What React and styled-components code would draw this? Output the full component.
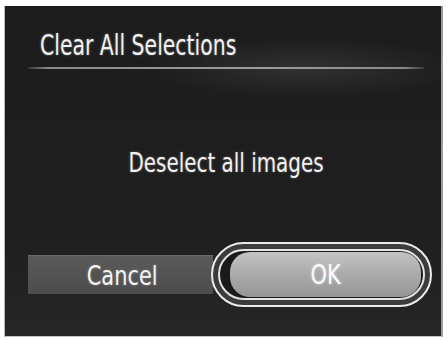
import React from 'react'
import styled, { createGlobalStyle } from 'styled-components'

const GlobalStyle = createGlobalStyle`
  html, body {
    margin: 0;
    padding: 0;
    background: #fff;
  }
  body {
    font-family: "DejaVu Sans Condensed", "DejaVu Sans", sans-serif;
    font-stretch: condensed;
  }
`

const Screen = styled.div`
  margin: 6px 0 0 4px;
  width: 439px;
  height: 331px;
  box-sizing: border-box;
  border-left: 1px solid #b8b8b8;
  border-right: 2px solid #9c9c9c;
  border-bottom: 1px solid #c4c4c4;
  background:
    radial-gradient(ellipse 160px 30px at 300px 62px, rgba(255, 255, 255, 0.09), transparent),
    linear-gradient(180deg, #1c1c1c 0%, #1f1f1f 70%, #262626 100%);
  display: flex;
  flex-direction: column;
  color: #f2f2f2;
`

// the camera font is narrower than anything installed, so squeeze the glyphs
const Squeeze = styled.span`
  display: inline-block;
  transform: scaleX(${({ $x }) => $x});
  transform-origin: ${({ $origin }) => $origin || 'center'};
  white-space: nowrap;
`

const Header = styled.div`
  padding: 24px 0 0 35px;
`

const Title = styled.h1`
  margin: 0;
  font-size: 28px;
  line-height: 32px;
  font-weight: 400;
  text-shadow: 0 0 3px rgba(255, 255, 255, 0.35);
`

const Divider = styled.div`
  margin: 5px 17px 0 23px;
  height: 2px;
  background: linear-gradient(90deg, rgba(150, 150, 150, 0.2) 0%, #8a8a8a 5%, #9c9c9c 60%, #8a8a8a 95%, rgba(150, 150, 150, 0.2) 100%);
`

const Body = styled.div`
  flex: 1;
  display: flex;
  align-items: center;
  justify-content: center;
  padding: 14px 0 0 6px;
`

const Message = styled.p`
  margin: 0;
  font-size: 27px;
  line-height: 30px;
  text-shadow: 0 0 3px rgba(255, 255, 255, 0.3);
`

const Footer = styled.div`
  display: flex;
  align-items: center;
  padding: 0 9px 29px 23px;
`

const CancelButton = styled.button`
  width: 185px;
  height: 39px;
  border: none;
  border-top: 1px solid #6a6a6a;
  background: linear-gradient(180deg, #5a5a5a, #4c4c4c);
  color: #f4f4f4;
  font: inherit;
  font-size: 27px;
  padding: 0 0 0 4px;
  text-shadow: 0 0 3px rgba(255, 255, 255, 0.3);
`

const OuterRing = styled.div`
  margin-left: -2px;
  width: 222px;
  height: 65px;
  box-sizing: border-box;
  border: 2px solid #ececec;
  border-radius: 33px;
  background: #3c3c3c;
  padding: 5px;
  display: flex;
`

const InnerRing = styled.div`
  flex: 1;
  border: 2px solid #e4e4e4;
  border-radius: 26px;
  background: #1a1a1a;
  padding: 1px 2px 1px 10px;
  display: flex;
`

const OkButton = styled.button`
  flex: 1;
  border: none;
  border-radius: 20px;
  background: linear-gradient(180deg, #c4c4c4 0%, #aaaaaa 50%, #959595 100%);
  color: #fafafa;
  font: inherit;
  font-size: 27px;
  text-shadow: 0 0 3px rgba(255, 255, 255, 0.5);
`

export default function App() {
  return (
    <>
      <GlobalStyle />
      <Screen>
        <Header>
          <Title><Squeeze $x={0.81} $origin="left">Clear All Selections</Squeeze></Title>
        </Header>
        <Divider />
        <Body>
          <Message><Squeeze $x={0.82}>Deselect all images</Squeeze></Message>
        </Body>
        <Footer>
          <CancelButton><Squeeze $x={0.86}>Cancel</Squeeze></CancelButton>
          <OuterRing>
            <InnerRing>
              <OkButton><Squeeze $x={0.86}>OK</Squeeze></OkButton>
            </InnerRing>
          </OuterRing>
        </Footer>
      </Screen>
    </>
  )
}
